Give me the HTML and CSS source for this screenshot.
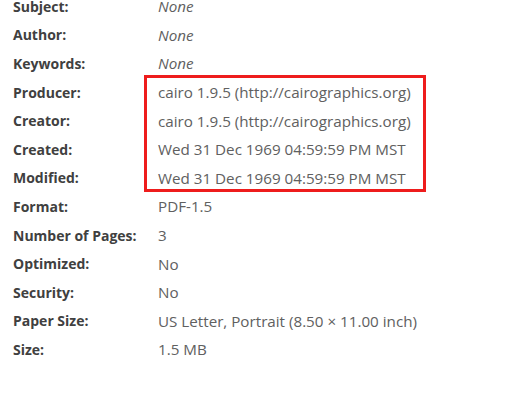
FILE: index.html
```html
<html>

<head>
    <link rel="stylesheet" href="styles.css">
    <title>Document Properties</title>
</head>

<body>
    <div class="props">
        <div class="row"><div class="label">Subject:</div><div class="value empty">None</div></div>
        <div class="row"><div class="label">Author:</div><div class="value empty">None</div></div>
        <div class="row"><div class="label">Keywords:</div><div class="value empty">None</div></div>
        <div class="boxed">
            <div class="row"><div class="label">Producer:</div><div class="value">cairo 1.9.5 (http://cairographics.org)</div></div>
            <div class="row"><div class="label">Creator:</div><div class="value">cairo 1.9.5 (http://cairographics.org)</div></div>
            <div class="row"><div class="label">Created:</div><div class="value">Wed 31 Dec 1969 04:59:59 PM MST</div></div>
            <div class="row"><div class="label">Modified:</div><div class="value">Wed 31 Dec 1969 04:59:59 PM MST</div></div>
        </div>
        <div class="row"><div class="label">Format:</div><div class="value">PDF-1.5</div></div>
        <div class="row"><div class="label">Number of Pages:</div><div class="value">3</div></div>
        <div class="row"><div class="label">Optimized:</div><div class="value">No</div></div>
        <div class="row"><div class="label">Security:</div><div class="value">No</div></div>
        <div class="row"><div class="label">Paper Size:</div><div class="value">US Letter, Portrait (8.50 &times; 11.00 inch)</div></div>
        <div class="row"><div class="label">Size:</div><div class="value">1.5 MB</div></div>
    </div>
</body>

</html>
```

FILE: styles.css
```css
body {
    background-color: #fff;
    margin: 0;
    padding: 0;
    overflow: hidden;
    font-family: "Open Sans", "Noto Sans", sans-serif;
}

.props {
    margin-top: -8px;
    padding-left: 13px;
}

.row {
    display: flex;
    align-items: center;
    height: 28.6px;
}

.row .label {
    width: 145px;
    flex-shrink: 0;
    font-size: 14px;
    font-weight: bold;
    color: #404040;
}

.row .value {
    font-size: 15.2px;
    color: #606060;
    white-space: nowrap;
}

.row .value.empty {
    font-style: italic;
}

/* red highlight drawn over the producer..modified values */
.boxed {
    position: relative;
}

.boxed::after {
    content: "";
    position: absolute;
    left: 131px;
    top: -3px;
    bottom: 0;
    width: 276px;
    border: 3px solid #ee1c1c;
}
```
